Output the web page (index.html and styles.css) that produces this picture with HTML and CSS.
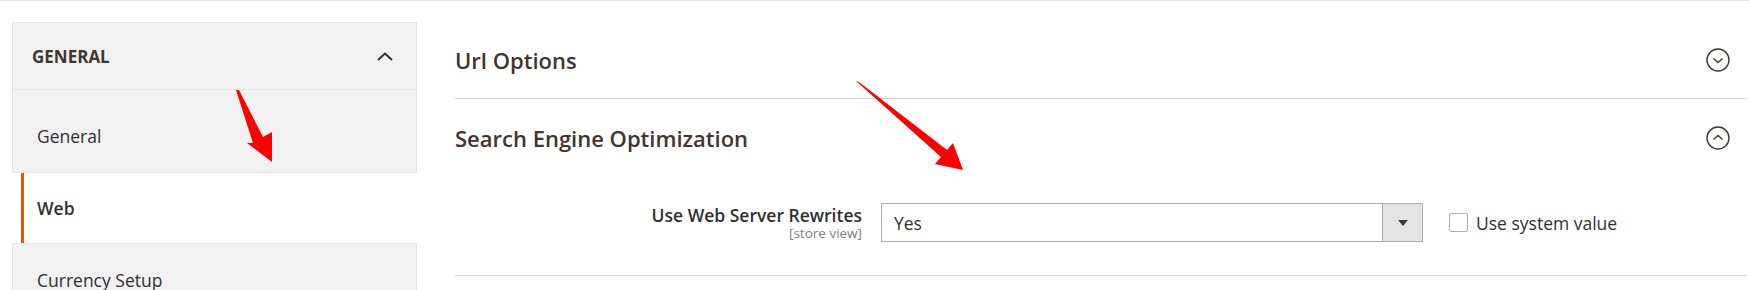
FILE: index.html
```html
<!DOCTYPE html>
<html>

<head>
    <meta charset="UTF-8">
    <title>Configuration - Web</title>
    <link rel="stylesheet" href="styles.css">
</head>

<body>
    <div class="page">
        <aside class="sidebar">
            <div class="nav-title">
                <span>General</span>
                <svg class="nav-chevron" width="16" height="9" viewBox="0 0 16 9">
                    <polyline points="1,8 8,1.5 15,8" fill="none" stroke="#303030" stroke-width="2" />
                </svg>
            </div>
            <ul class="nav-items">
                <li class="nav-item"><a class="nav-link">General</a></li>
                <li class="nav-item active"><a class="nav-link">Web</a></li>
                <li class="nav-item"><a class="nav-link">Currency Setup</a></li>
            </ul>
        </aside>

        <main class="content">
            <section class="section">
                <div class="section-head">
                    <h2 class="section-title">Url Options</h2>
                    <svg class="toggle" width="24" height="24" viewBox="0 0 24 24">
                        <circle cx="12" cy="12" r="11" fill="none" stroke="#41362f" stroke-width="1.4" />
                        <polyline points="7.5,10.5 12,14.5 16.5,10.5" fill="none" stroke="#41362f" stroke-width="1.4" />
                    </svg>
                </div>
            </section>

            <section class="section">
                <div class="section-head">
                    <h2 class="section-title">Search Engine Optimization</h2>
                    <svg class="toggle" width="24" height="24" viewBox="0 0 24 24">
                        <circle cx="12" cy="12" r="11" fill="none" stroke="#41362f" stroke-width="1.4" />
                        <polyline points="7.5,13.5 12,9.5 16.5,13.5" fill="none" stroke="#41362f" stroke-width="1.4" />
                    </svg>
                </div>
                <div class="fieldset">
                    <div class="field">
                        <label class="field-label">
                            <span class="label-text">Use Web Server Rewrites</span>
                            <span class="scope">[store view]</span>
                        </label>
                        <div class="select">
                            <span class="select-value">Yes</span>
                            <span class="select-btn">
                                <svg width="10" height="6" viewBox="0 0 10 6">
                                    <polygon points="0,0 10,0 5,6" fill="#41362f" />
                                </svg>
                            </span>
                        </div>
                        <div class="use-default">
                            <span class="checkbox"></span>
                            <span>Use system value</span>
                        </div>
                    </div>
                </div>
            </section>
        </main>
    </div>

    <!-- annotation arrows drawn over the screenshot -->
    <svg class="arrows" width="1749" height="290" viewBox="0 0 1749 290">
        <polygon points="236,90 239,90 263,137 272,132 272,162 247,143 253,143" fill="#ff0000" />
        <polygon points="856,81 859,82 947,150 953,143 963,170 935,164 941,157" fill="#ff0000" />
    </svg>
</body>

</html>
```

FILE: styles.css
```css
html,
body {
    height: 100%;
    overflow: hidden;
}

body {
    font-family: "Open Sans", "Liberation Sans", sans-serif;
    margin: 0;
    padding: 0;
    background-color: #fff;
    color: #303030;
    border-top: 1px solid #e3e3e3;
    position: relative;
}

.page {
    display: flex;
    align-items: flex-start;
    gap: 38px;
    padding: 21px 2px 0 12px;
}

/* sidebar */

.sidebar {
    width: 405px;
    flex-shrink: 0;
    box-sizing: border-box;
    background-color: #f1f1f1;
    border: 1px solid #e3e3e3;
}

.nav-title {
    display: flex;
    align-items: center;
    justify-content: space-between;
    height: 66px;
    padding: 0 23px 0 19px;
    border-bottom: 1px solid #e3e3e3;
    font-size: 17px;
    font-weight: 700;
    text-transform: uppercase;
    color: #41362f;
}

.nav-items {
    list-style: none;
    margin: 0;
    padding: 10px 0 0;
}

.nav-item {
    display: flex;
}

.nav-link {
    flex: 1;
    display: flex;
    align-items: center;
    height: 72px;
    padding-left: 24px;
    font-size: 17.5px;
    color: #303030;
}

.nav-item.active {
    background-color: #fff;
    margin: 0 -1px;
    border-top: 1px solid #e3e3e3;
    border-bottom: 1px solid #e3e3e3;
}

.nav-item.active .nav-link {
    height: 70px;
    margin-left: 9px;
    padding-left: 13px;
    border-left: 3px solid #eb5202;
    font-weight: 600;
}

/* main */

.content {
    flex: 1;
}

.section-head {
    display: flex;
    align-items: center;
    justify-content: space-between;
    height: 76px;
    padding-right: 17px;
    border-bottom: 1px solid #d6d6d6;
}

.section:nth-child(2) .section-head {
    height: 78px;
    border-bottom: none;
}

.section-title {
    margin: 0;
    font-size: 22px;
    font-weight: 600;
    color: #41362f;
}

.fieldset {
    padding: 26px 0 33px;
    border-bottom: 1px solid #d6d6d6;
}

.field {
    display: flex;
    align-items: flex-start;
}

.field-label {
    width: 407px;
    flex-shrink: 0;
    padding-top: 1px;
    text-align: right;
    color: #303030;
}

.label-text {
    display: block;
    font-size: 17.5px;
    font-weight: 600;
    line-height: 22px;
}

.scope {
    display: block;
    font-size: 13.5px;
    font-weight: 400;
    line-height: 15px;
    color: #808080;
}

.select {
    display: flex;
    width: 542px;
    height: 39px;
    margin-left: 19px;
    box-sizing: border-box;
    border: 1px solid #adadad;
    background-color: #fff;
}

.select-value {
    flex: 1;
    display: flex;
    align-items: center;
    padding-left: 12px;
    font-size: 17.5px;
    color: #303030;
}

.select-btn {
    display: flex;
    align-items: center;
    justify-content: center;
    width: 39px;
    background-color: #e3e3e3;
    border-left: 1px solid #adadad;
}

.use-default {
    display: flex;
    align-items: center;
    gap: 8px;
    height: 39px;
    margin-left: 26px;
    font-size: 17.5px;
    color: #303030;
}

.checkbox {
    width: 19px;
    height: 19px;
    box-sizing: border-box;
    border: 1px solid #adadad;
    border-radius: 2px;
    background-color: #fff;
}

.arrows {
    position: absolute;
    top: -1px;
    left: 0;
    pointer-events: none;
}
```
